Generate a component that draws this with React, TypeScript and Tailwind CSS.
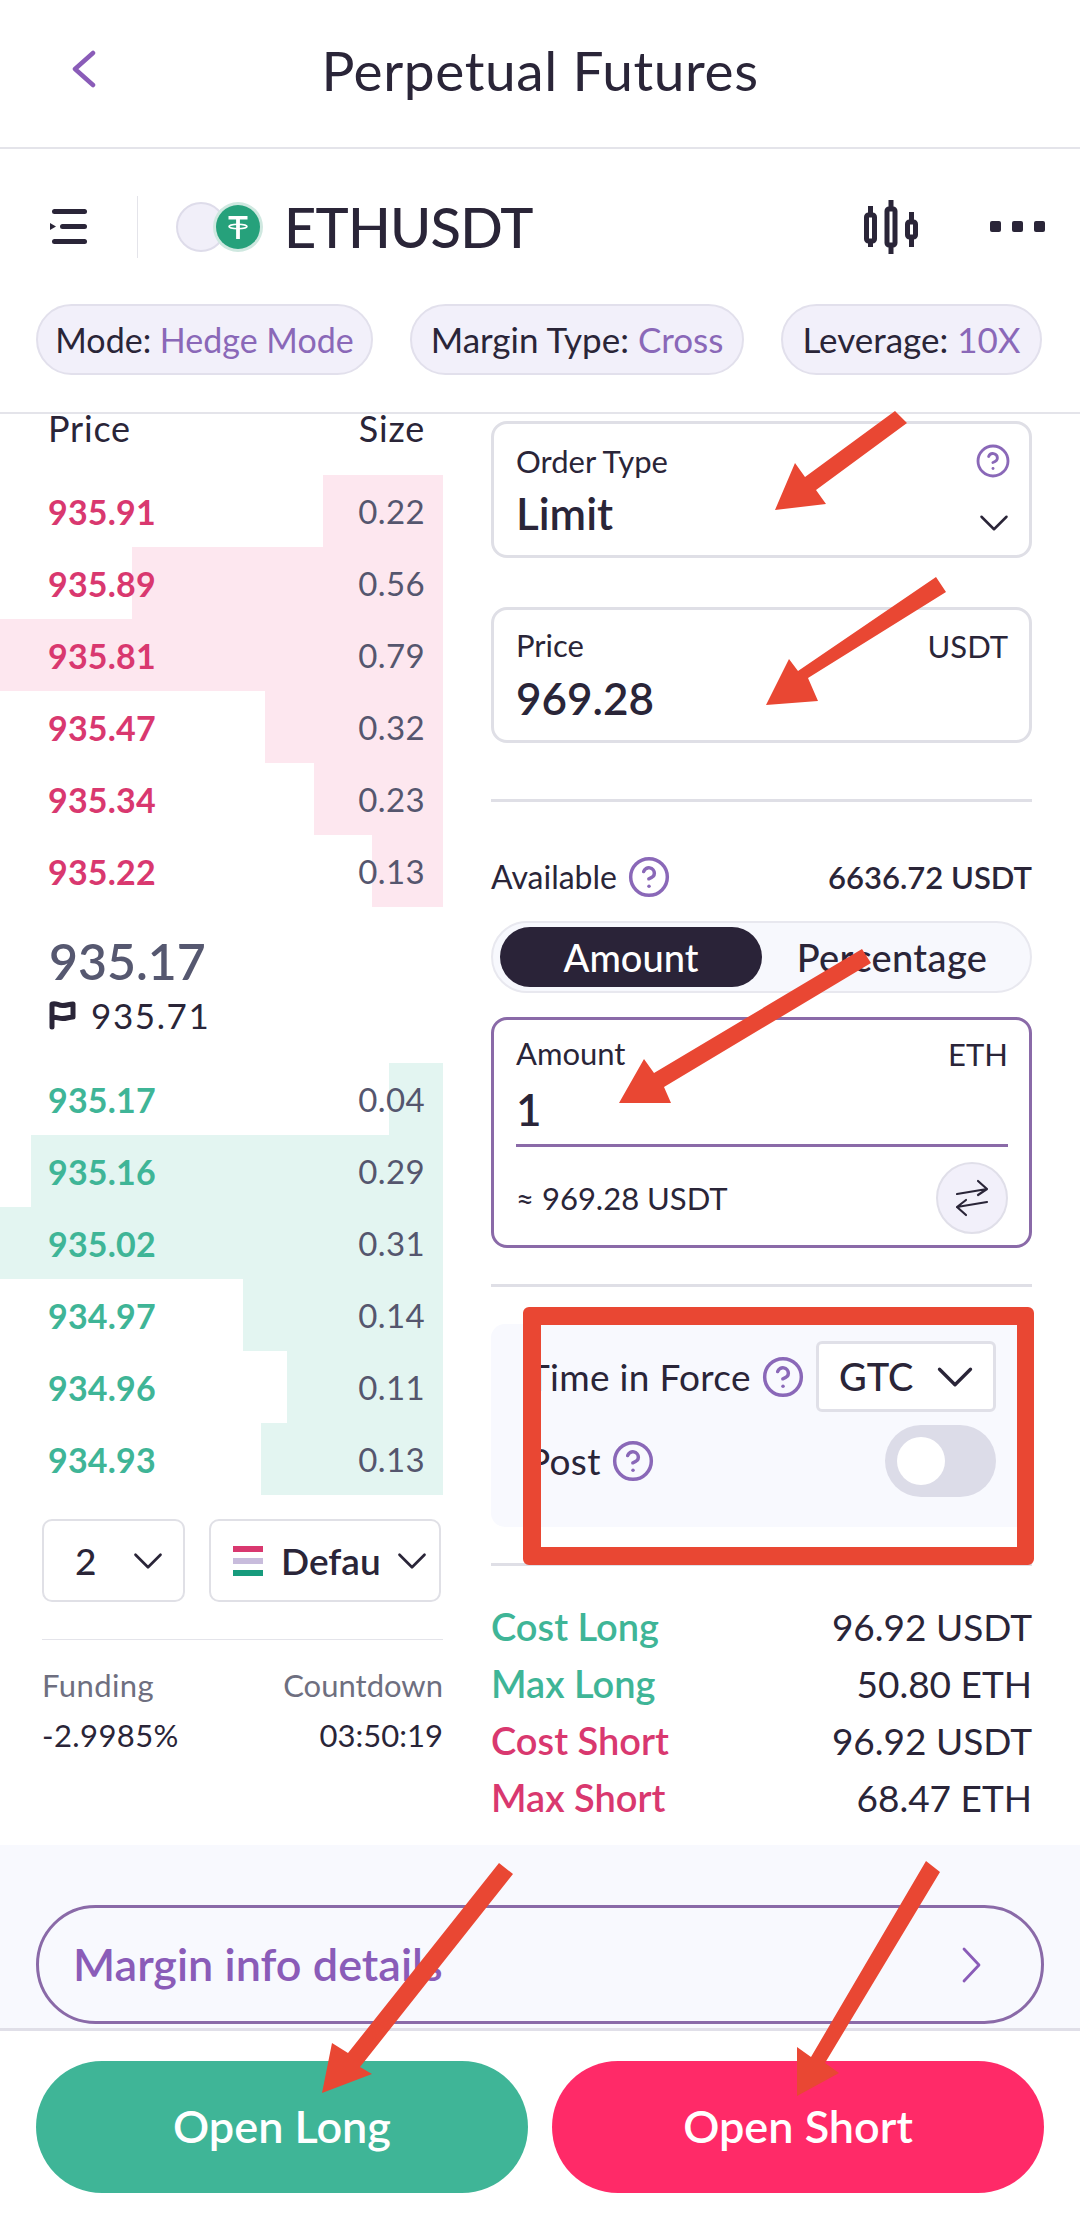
import React from "react";
import { CircleHelp, ChevronDown } from "lucide-react";

const asks = [
  ["935.91", "0.22", 323],
  ["935.89", "0.56", 132],
  ["935.81", "0.79", 0],
  ["935.47", "0.32", 265],
  ["935.34", "0.23", 314],
  ["935.22", "0.13", 372],
] as const;
const bids = [
  ["935.17", "0.04", 389],
  ["935.16", "0.29", 31],
  ["935.02", "0.31", 0],
  ["934.97", "0.14", 243],
  ["934.96", "0.11", 287],
  ["934.93", "0.13", 261],
] as const;

function Help({ size }: { size: number }) {
  return <CircleHelp size={size} color="#8a68b8" strokeWidth={1.9} className="shrink-0" />;
}

function Row({ p, s, left, kind }: { p: string; s: string; left: number; kind: "a" | "b" }) {
  return (
    <div className="relative flex h-[72px] items-center justify-between pl-[48px] pr-[18px]">
      <div
        className={kind === "a" ? "absolute inset-y-0 right-0 bg-[#fde7ef]" : "absolute inset-y-0 right-0 bg-[#e3f5f1]"}
        style={{ left }}
      />
      <span className={kind === "a" ? "relative text-[34px] font-bold tracking-[0.2px] text-[#d9386f]" : "relative text-[34px] font-bold tracking-[0.2px] text-[#3fb597]"}>{p}</span>
      <span className="relative mt-[2px] text-[33px] tracking-[0.4px] text-[#55566e]">{s}</span>
    </div>
  );
}

function Stat({ k, v, green }: { k: string; v: string; green?: boolean }) {
  return (
    <div className="flex h-[57px] items-center justify-between">
      <span className={green ? "text-[38px] font-semibold text-[#3fb597]" : "text-[38px] font-semibold text-[#d9386f]"}>{k}</span>
      <span className="text-[37px] text-[#2a2538]">{v}</span>
    </div>
  );
}

export default function App() {
  return (
    <div className="relative h-[2223px] w-[1080px] overflow-hidden bg-white font-['Lato',sans-serif] text-[#2a2538]">
      {/* title */}
      <div className="relative flex h-[149px] items-center justify-center border-b-2 border-[#e4e4ea] pb-[6px]">
        <svg width="24" height="38" viewBox="0 0 24 38" fill="none" stroke="#8a5cb8" strokeWidth="4.5" strokeLinecap="round" strokeLinejoin="round" className="absolute left-[72px] top-[50px]">
          <path d="M21 3 3 19l18 16" />
        </svg>
        <span className="text-[55px] tracking-[0.6px]">Perpetual Futures</span>
      </div>

      {/* pair */}
      <div className="flex h-[155px] items-center pl-[50px] pr-[35px]">
        <svg width="38" height="36" viewBox="0 0 38 36" className="shrink-0" fill="#2a2538">
          <rect x="2" y="0" width="35" height="5" rx="2.5" />
          <path d="M0 14 L6 17.5 L0 21 Z" />
          <rect x="10" y="15" width="27" height="5" rx="2.5" />
          <rect x="2" y="30" width="35" height="5" rx="2.5" />
        </svg>
        <div className="ml-[49px] h-[62px] w-px bg-[#e4e4ea]" />
        <div className="relative ml-[38px] h-[50px] w-[86px] shrink-0">
          <div className="absolute left-0 top-0 h-[50px] w-[50px] rounded-full border-2 border-[#dedcea] bg-[#f1eff9]" />
          <svg width="50" height="50" viewBox="0 0 50 50" className="absolute left-[37px] top-0">
            <circle cx="25" cy="25" r="25" fill="#cfe8e0" />
            <circle cx="25" cy="25" r="22" fill="#26a17b" />
            <path d="M15.500 14h19v3.600h-7.600v4.600h-3.800v-4.600h-7.600z" fill="#fff" />
            <path d="M23.100 22h3.800v15h-3.800z" fill="#fff" />
            <ellipse cx="25" cy="24.500" rx="9" ry="2.200" fill="none" stroke="#fff" strokeWidth="1.600" />
          </svg>
        </div>
        <span className="ml-[22px] text-[56px] font-medium tracking-[-0.8px]">ETHUSDT</span>
        <svg width="54" height="54" viewBox="0 0 54 54" className="ml-auto shrink-0" fill="none" stroke="#2a2538" strokeWidth="5">
          <rect x="2.500" y="15" width="8" height="26" rx="2" />
          <path d="M6.500 6v9M6.500 41v6" />
          <rect x="23" y="9" width="8" height="36" rx="2" />
          <path d="M27 0v9M27 45v9" />
          <rect x="43.500" y="22" width="8" height="15" rx="2" />
          <path d="M47.500 12v10M47.500 37v10" />
        </svg>
        <div className="ml-[72px] flex gap-[11px]">
          <div className="h-[11px] w-[11px] rounded-[2px] bg-[#2a2538]" />
          <div className="h-[11px] w-[11px] rounded-[2px] bg-[#2a2538]" />
          <div className="h-[11px] w-[11px] rounded-[2px] bg-[#2a2538]" />
        </div>
      </div>

      {/* chips */}
      <div className="flex h-[110px] gap-[37px] border-b-2 border-[#e4e4ea] pl-[36px]">
        <div className="flex h-[71px] w-[337px] items-center justify-center rounded-[36px] border-2 border-[#e2e0ec] bg-[#f2f0fa] text-[34px]">
          Mode:&nbsp;<span className="text-[#8a68b8]">Hedge Mode</span>
        </div>
        <div className="flex h-[71px] w-[334px] items-center justify-center rounded-[36px] border-2 border-[#e2e0ec] bg-[#f2f0fa] text-[35px]">
          Margin Type:&nbsp;<span className="text-[#8a68b8]">Cross</span>
        </div>
        <div className="flex h-[71px] w-[261px] items-center justify-center rounded-[36px] border-2 border-[#e2e0ec] bg-[#f2f0fa] text-[35px]">
          Leverage:&nbsp;<span className="text-[#8a68b8]">10X</span>
        </div>
      </div>

      {/* body */}
      <div className="flex h-[1431px]">
        {/* book */}
        <div className="w-[443px] shrink-0">
          <div className="flex h-[61px] items-start justify-between pl-[48px] pr-[18px] text-[36px] leading-[28px] tracking-[0.8px]">
            <span>Price</span>
            <span>Size</span>
          </div>
          {asks.map(([p, s, l]) => (
            <Row key={p} p={p} s={s} left={l} kind="a" />
          ))}
          <div className="flex h-[156px] flex-col pl-[49px] pt-[24px]">
            <span className="text-[50px] font-semibold leading-[60px] text-[#565870]">935.17</span>
            <div className="flex items-center gap-[15px] leading-[48px]">
              <svg width="27" height="30" viewBox="0 0 27 30" fill="none" stroke="#2a2538" strokeWidth="5" strokeLinejoin="round" strokeLinecap="round">
                <path d="M3 27V4c4-1.500 6 1.500 10.500 1.500S20 4 24 4v13c-4 0-6 1.500-10.500 1.500-4 0-6.500-2-10.500-1" />
              </svg>
              <span className="text-[35px] tracking-[1.6px]">935.71</span>
            </div>
          </div>
          {bids.map(([p, s, l]) => (
            <Row key={p} p={p} s={s} left={l} kind="b" />
          ))}
          <div className="ml-[42px] mt-[24px] flex gap-[24px]">
            <div className="flex h-[83px] w-[143px] items-center justify-between rounded-[10px] border-2 border-[#e0e0e6] pl-[31px] pr-[10px]">
              <span className="text-[37px] font-medium">2</span>
              <ChevronDown size={50} strokeWidth={1.3} />
            </div>
            <div className="flex h-[83px] w-[232px] items-center rounded-[10px] border-2 border-[#e0e0e6] pl-[22px]">
              <div className="flex h-[30px] w-[30px] flex-col justify-between">
                <div className="h-[6px] bg-[#d9386f]" />
                <div className="h-[6px] bg-[#c8bcdc]" />
                <div className="h-[6px] bg-[#179b7d]" />
              </div>
              <span className="ml-[18px] text-[37px] font-semibold">Defau</span>
              <ChevronDown size={50} strokeWidth={1.3} className="ml-[6px]" />
            </div>
          </div>
          <div className="ml-[42px] mt-[37px] border-t border-[#e4e4ea] pt-[25px]">
            <div className="flex justify-between text-[31px] leading-[40px] text-[#6e6f80]">
              <span className="tracking-[0.4px]">Funding</span>
              <span>Countdown</span>
            </div>
            <div className="mt-[10px] flex justify-between text-[31px] leading-[40px]">
              <span className="tracking-[0.4px]">-2.9985%</span>
              <span>03:50:19</span>
            </div>
          </div>
        </div>

        {/* form */}
        <div className="ml-[48px] w-[541px] shrink-0 pt-[7px]">
          <div className="relative h-[137px] rounded-[16px] border-[3px] border-[#dfdfe6] pl-[22px] pr-[10px] pt-[18px]">
            <div className="flex items-start justify-between">
              <span className="text-[31px] leading-[38px]">Order Type</span>
              <div className="mr-[8px] mt-[1px]"><Help size={36} /></div>
            </div>
            <div className="flex h-[56px] items-start justify-between">
              <span className="mt-[5px] text-[44px] font-semibold leading-[56px]">Limit</span>
              <ChevronDown size={50} strokeWidth={1.2} className="mt-[18px]" />
            </div>
          </div>
          <div className="mt-[49px] h-[136px] rounded-[16px] border-[3px] border-[#dfdfe6] pl-[22px] pr-[21px] pt-[15px]">
            <div className="flex items-center justify-between">
              <span className="text-[31px] leading-[38px]">Price</span>
              <span className="mt-[2px] text-[31px] leading-[38px]">USDT</span>
            </div>
            <div className="mt-[5px] text-[44px] font-semibold leading-[56px]">969.28</div>
          </div>
          <div className="mt-[56px] h-[3px] bg-[#dfdfe6]" />
          <div className="mt-[55px] flex h-[40px] items-center justify-between">
            <div className="flex items-center gap-[10px]">
              <span className="text-[32px]">Available</span>
              <Help size={44} />
            </div>
            <span className="text-[31px] font-semibold">6636.72 USDT</span>
          </div>
          <div className="mt-[24px] flex h-[72px] items-center rounded-[36px] border-2 border-[#e8e8ef] bg-[#f7f8fd] pl-[7px]">
            <div className="flex h-[60px] w-[262px] items-center justify-center rounded-[30px] bg-[#2a2338] text-[38px] font-medium text-white">Amount</div>
            <div className="flex flex-1 items-center justify-center pr-[8px] text-[38px] font-medium tracking-[0.4px]">Percentage</div>
          </div>
          <div className="mt-[24px] h-[231px] rounded-[16px] border-[3px] border-[#8a6aa8] pl-[22px] pr-[21px] pt-[12px]">
            <div className="flex items-center justify-between">
              <span className="text-[31px] leading-[38px]">Amount</span>
              <span className="mt-[3px] text-[31px] leading-[38px]">ETH</span>
            </div>
            <div className="h-[74px] border-b-[3px] border-[#8a6aa8] pt-[6px] text-[44px] font-semibold leading-[60px]">1</div>
            <div className="mt-[15px] flex items-center justify-between">
              <span className="text-[31px]">≈ 969.28 USDT</span>
              <div className="flex h-[72px] w-[72px] items-center justify-center rounded-full border-2 border-[#e0dfe9] bg-[#f2f0fa]">
                <svg width="36" height="38" viewBox="0 0 36 38" fill="none" stroke="#2a2538" strokeWidth="2.200" strokeLinecap="round" strokeLinejoin="round">
                  <path d="M3 15 33 10M24 2l9 8-9 6" />
                  <path d="M33 23 3 28M12 36l-9-8 9-7" />
                </svg>
              </div>
            </div>
          </div>
          <div className="mt-[36px] h-[3px] bg-[#dfdfe6]" />
          <div className="mt-[37px] h-[203px] rounded-[14px] bg-[#f8f9fe] pl-[37px] pr-[36px] pt-[17px]">
            <div className="flex h-[71px] items-center">
              <span className="text-[37px] tracking-[0.3px]">Time in Force</span>
              <div className="ml-[10px]"><Help size={44} /></div>
              <div className="ml-auto flex h-[71px] w-[180px] items-center justify-between rounded-[6px] border-[3px] border-[#e0e0e8] bg-white pl-[20px] pr-[7px]">
                <span className="text-[38px] font-medium">GTC</span>
                <ChevronDown size={62} strokeWidth={1.3} />
              </div>
            </div>
            <div className="mt-[13px] flex h-[72px] items-center">
              <span className="text-[37px] tracking-[0.3px]">Post</span>
              <div className="ml-[10px]"><Help size={44} /></div>
              <div className="ml-auto flex h-[72px] w-[111px] items-center rounded-[36px] bg-[#dcdce8] pl-[12px]">
                <div className="h-[48px] w-[48px] rounded-full bg-white" />
              </div>
            </div>
          </div>
          <div className="mt-[36px] h-[3px] bg-[#dfdfe6]" />
          <div className="mt-[32px]">
            <Stat k="Cost Long" v="96.92 USDT" green />
            <Stat k="Max Long" v="50.80 ETH" green />
            <Stat k="Cost Short" v="96.92 USDT" />
            <Stat k="Max Short" v="68.47 ETH" />
          </div>
        </div>
      </div>

      {/* margin band */}
      <div className="h-[186px] border-b-[3px] border-[#e0dfe8] bg-[#f8f9fe] px-[36px] pt-[60px]">
        <div className="flex h-[119px] items-center justify-between rounded-[60px] border-[3px] border-[#8a6aa8] pl-[34px] pr-[60px]">
          <span className="text-[45px] font-semibold text-[#8a5cb8]">Margin info details</span>
          <svg width="20" height="36" viewBox="0 0 20 36" fill="none" stroke="#8a5cb8" strokeWidth="2.800" strokeLinecap="round" strokeLinejoin="round">
            <path d="M3 2 18 18 3 34" />
          </svg>
        </div>
      </div>

      {/* actions */}
      <div className="flex gap-[24px] px-[36px] pt-[30px]">
        <div className="flex h-[132px] flex-1 items-center justify-center rounded-[66px] bg-[#3fb597] text-[45px] font-semibold text-white">Open Long</div>
        <div className="flex h-[132px] flex-1 items-center justify-center rounded-[66px] bg-[#ff2a68] text-[45px] font-semibold text-white">Open Short</div>
      </div>

      {/* annotations */}
      <svg width="1080" height="2223" viewBox="0 0 1080 2223" className="pointer-events-none absolute left-0 top-0" fill="#e94733">
        <polygon points="895,411 907,423 816,490 826,504 775,510 795,463 805,477" />
        <polygon points="936,577 946,592 808,678 818,701 766,705 789,659 798,671" />
        <polygon points="862,949 871,963 664,1087 671,1103 619,1103 644,1059 654,1073" />
        <polygon points="499,1863 513,1874 360,2067 372,2074 322,2093 332,2043 348,2053" />
        <polygon points="926,1861 940,1872 825,2063 839,2073 797,2096 797,2047 811,2057" />
        <path fillRule="evenodd" d="M529 1307H1028a6 6 0 0 1 6 6V1559a6 6 0 0 1-6 6H529a6 6 0 0 1-6-6V1313a6 6 0 0 1 6-6ZM541 1325V1547H1017V1325Z" />
      </svg>
    </div>
  );
}
